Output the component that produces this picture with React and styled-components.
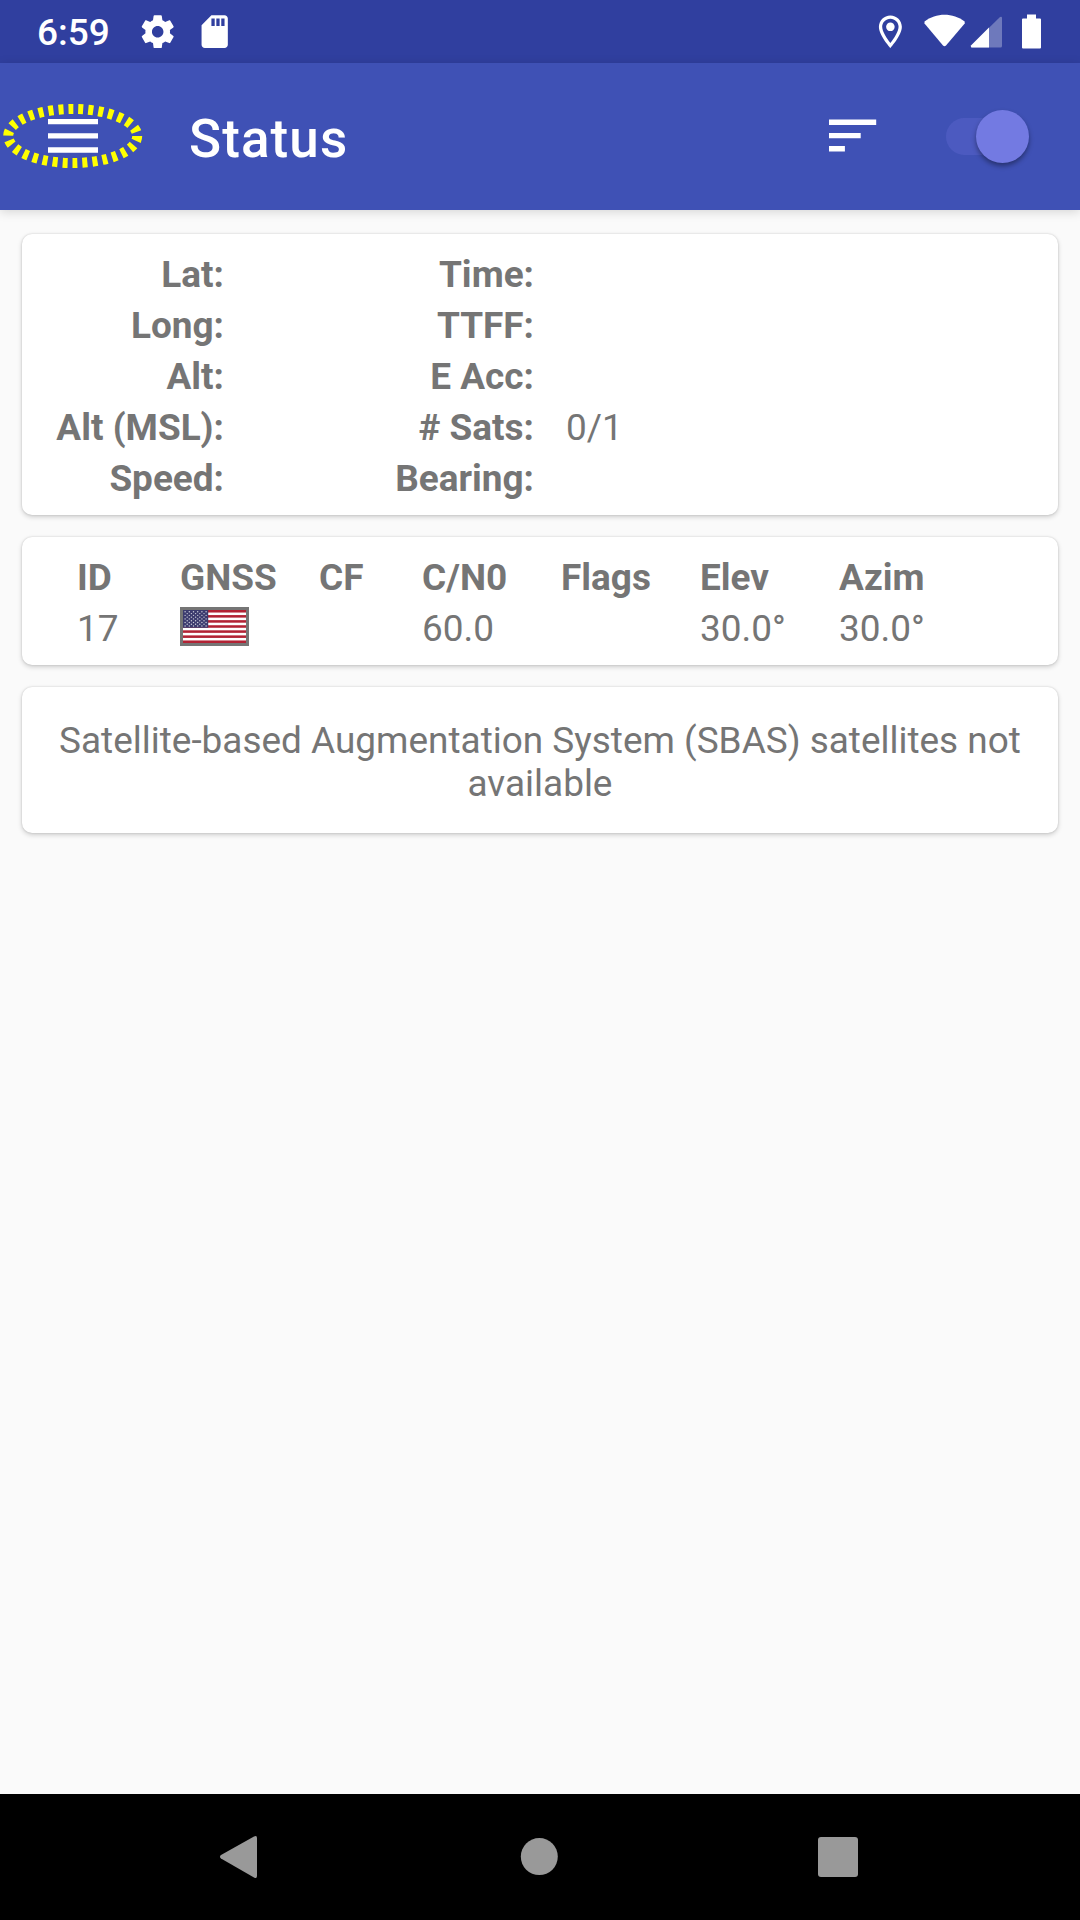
import React from 'react';
import styled, { createGlobalStyle } from 'styled-components';

const Global = createGlobalStyle`
  *, *::before, *::after { box-sizing: border-box; }
  html, body { margin: 0; padding: 0; background: #fafafa; }
  body { font-family: Roboto, "Noto Sans", sans-serif; }
  svg { display: block; flex: none; }
`;

const Screen = styled.div`
  display: flex;
  flex-direction: column;
  width: 1080px;
  height: 1920px;
  background: #fafafa;
  color: #757575;
  overflow: hidden;
`;

const StatusBar = styled.header`
  display: flex;
  align-items: center;
  flex: none;
  height: 63px;
  padding: 0 38px 0 37px;
  background: #303f9f;
  color: #fff;
`;

const Clock = styled.time`
  width: 100.5px;
  padding-top: 2px;
  font-size: 37px;
  font-weight: 500;
  line-height: 63px;
`;

const Notifications = styled.div`
  display: flex;
  align-items: center;
  gap: 18.6px;
`;

const Spacer = styled.div`
  flex: 1;
`;

const Toolbar = styled.nav`
  display: flex;
  align-items: center;
  flex: none;
  height: 147px;
  padding-right: 51px;
  background: #3f51b5;
  color: #fff;
  box-shadow: 0 2px 10px rgba(0, 0, 0, 0.15);
`;

const MenuButton = styled.button`
  width: 147px;
  height: 147px;
  flex: none;
  padding: 0;
  border: 0;
  background: none;
  cursor: pointer;
`;

const Title = styled.h1`
  margin: 0 0 0 42px;
  padding-top: 4px;
  font-size: 53px;
  font-weight: 500;
  line-height: 62px;
  letter-spacing: 1.1px;
`;

const IconButton = styled.button`
  width: 63px;
  height: 63px;
  margin-right: 62px;
  padding: 0;
  border: 0;
  background: none;
  cursor: pointer;
`;

const Track = styled.div`
  display: flex;
  align-items: center;
  justify-content: flex-end;
  width: 83px;
  height: 37px;
  border-radius: 19px;
  background: linear-gradient(90deg, #4c5ac0 75%, transparent 75%);
`;

const Thumb = styled.div`
  width: 53px;
  height: 53px;
  flex: none;
  border-radius: 50%;
  background: #737ae2;
  box-shadow: 0 3px 5px rgba(0, 0, 0, 0.38);
`;

const Content = styled.main`
  display: flex;
  flex-direction: column;
  gap: 22px;
  flex: 1;
  padding: 24px 22px;
`;

const Card = styled.section`
  height: ${(p) => p.$height}px;
  padding: ${(p) => p.$pad};
  border-radius: 10px;
  background: #fff;
  box-shadow: 0 0 2px rgba(0, 0, 0, 0.16), 0 2px 5px rgba(0, 0, 0, 0.18);
  font-size: 36.95px;
`;

const Facts = styled.div`
  display: grid;
  grid-template-columns: 202px 35px 275px 32px 1fr;
  grid-auto-rows: 51px;
  line-height: 51px;
`;

const Label = styled.span`
  grid-column: ${(p) => p.$col};
  font-weight: 700;
  text-align: right;
  white-space: nowrap;
`;

const Value = styled.span`
  grid-column: 5;
`;

const SatTable = styled.div`
  display: grid;
  grid-template-columns: 103px 139px 103px 139px 139px 139px 139px;
  grid-auto-rows: 51px;
  line-height: 51px;
`;

const Cell = styled.span`
  font-weight: ${(p) => (p.$head ? 700 : 400)};
  white-space: nowrap;
`;

const FlagFrame = styled.span`
  display: block;
  width: 69px;
  height: 39px;
  margin-top: 4px;
  border: 3px solid #757575;
`;

const Notice = styled.p`
  margin: 0;
  line-height: 43px;
  text-align: center;
`;

const NavBar = styled.footer`
  display: flex;
  align-items: center;
  justify-content: space-between;
  flex: none;
  height: 126px;
  padding: 0 221px 0 218px;
  background: #000;
`;

const facts = [
  ['Lat:', 'Time:', ''],
  ['Long:', 'TTFF:', ''],
  ['Alt:', 'E Acc:', ''],
  ['Alt (MSL):', '# Sats:', '0/1'],
  ['Speed:', 'Bearing:', ''],
];

const columns = ['ID', 'GNSS', 'CF', 'C/N0', 'Flags', 'Elev', 'Azim'];

function SettingsIcon() {
  return (
    <svg width="39.4" height="39.4" viewBox="0 0 24 24" fill="#fff">
      <path d="M19.43 12.98c.04-.32.07-.64.07-.98s-.03-.66-.07-.98l2.11-1.65c.19-.15.24-.42.12-.64l-2-3.46c-.12-.22-.39-.3-.61-.22l-2.49 1c-.52-.4-1.08-.73-1.69-.98l-.38-2.65C14.46 2.18 14.25 2 14 2h-4c-.25 0-.46.18-.49.42l-.38 2.65c-.61.25-1.17.59-1.69.98l-2.49-1c-.23-.09-.49 0-.61.22l-2 3.46c-.13.22-.07.49.12.64l2.11 1.65c-.04.32-.07.65-.07.98s.03.66.07.98l-2.11 1.65c-.19.15-.24.42-.12.64l2 3.46c.12.22.39.3.61.22l2.49-1c.52.4 1.08.73 1.69.98l.38 2.65c.03.24.24.42.49.42h4c.25 0 .46-.18.49-.42l.38-2.65c.61-.25 1.17-.59 1.69-.98l2.49 1c.23.09.49 0 .61-.22l2-3.46c.12-.22.07-.49-.12-.64l-2.11-1.65zM12 15.5c-1.93 0-3.5-1.57-3.5-3.5s1.57-3.5 3.5-3.5 3.5 1.57 3.5 3.5-1.57 3.5-3.5 3.5z" />
    </svg>
  );
}

function SdIcon() {
  return (
    <svg width="39.4" height="39.4" viewBox="0 0 24 24" fill="#fff">
      <path d="M18 2h-8L4 8v12c0 1.1.9 2 2 2h12c1.1 0 2-.9 2-2V4c0-1.1-.9-2-2-2zM12 8.500h-2V4h2v4.500zm3 0h-2V4h2v4.500zm3 0h-2V4h2v4.500z" />
    </svg>
  );
}

function StatusIcons() {
  return (
    <svg width="166" height="40" viewBox="876 11.500 166 40" fill="#fff">
      <g transform="translate(870.7 11.6) scale(1.64)">
        <path d="M12 2C8.130 2 5 5.130 5 9c0 5.250 7 13 7 13s7-7.750 7-13c0-3.870-3.130-7-7-7zM7 9c0-2.760 2.240-5 5-5s5 2.240 5 5c0 2.880-2.880 7.190-5 9.880C9.920 16.210 7 11.850 7 9z" />
        <circle cx="12" cy="9" r="2.600" />
      </g>
      <path d="M924.500 21C936 12 953 12 964.700 21V23L946 45Q944.500 46.500 943 45L924.500 23Z" />
      <path d="M971 45L1000 16.500Q1002 15.500 1002 17.500V45.500Q1002 47 1000.500 47H971.500Q970.500 46.500 971 45Z" opacity=".3" />
      <path d="M971 45L989 27V47H971.500Q970.500 46.500 971 45Z" />
      <path d="M1027 14H1036V18H1040Q1041 18 1041 19V47Q1041 48 1040 48H1023Q1022 48 1022 47V19Q1022 18 1023 18H1027Z" />
    </svg>
  );
}

function MenuIcon() {
  return (
    <svg width="147" height="147" viewBox="0 63 147 147">
      <path d="M48 119h50v5.300H48zM48 133.200h50v5.300H48zM48 147.300h50v5.500H48z" fill="#fff" />
      <ellipse cx="72.700" cy="136" rx="64.500" ry="27" fill="none" stroke="#ff0" strokeWidth="10" strokeDasharray="5 5" />
    </svg>
  );
}

function SortIcon() {
  return (
    <svg width="63" height="63" viewBox="821 105 63 63" fill="#fff">
      <path d="M829 119.500h47.200v5.500H829zM829 133h31.700v5.200H829zM829 146h15.900v5.500H829z" />
    </svg>
  );
}

function UsFlag() {
  const stars = [];
  for (let r = 0; r < 9; r += 1) {
    for (let c = 0; c < (r % 2 ? 5 : 6); c += 1) {
      stars.push([2.1 + c * 4.2 + (r % 2 ? 2.1 : 0), 1.8 + r * 1.78]);
    }
  }
  return (
    <svg width="63" height="33" viewBox="0 0 63 33">
      <rect width="63" height="33" fill="#fff" />
      {[0, 1, 2, 3, 4, 5, 6].map((i) => (
        <rect key={i} y={(i * 66) / 13} width="63" height={33 / 13} fill="#b22234" />
      ))}
      <rect width="25.200" height="17.770" fill="#3c3b6e" />
      {stars.map(([x, y]) => (
        <circle key={`${x}-${y}`} cx={x} cy={y} r=".7" fill="#fff" opacity=".75" />
      ))}
    </svg>
  );
}

export default function App() {
  return (
    <Screen>
      <Global />
      <StatusBar>
        <Clock>6:59</Clock>
        <Notifications>
          <SettingsIcon />
          <SdIcon />
        </Notifications>
        <Spacer />
        <StatusIcons />
      </StatusBar>
      <Toolbar>
        <MenuButton aria-label="Menu"><MenuIcon /></MenuButton>
        <Title>Status</Title>
        <Spacer />
        <IconButton aria-label="Sort"><SortIcon /></IconButton>
        <Track><Thumb /></Track>
      </Toolbar>
      <Content>
        <Card $height={281} $pad="15px 0 0 0">
          <Facts>
            {facts.map(([left, right, value]) => (
              <React.Fragment key={left}>
                <Label $col={1}>{left}</Label>
                <Label $col={3}>{right}</Label>
                <Value>{value}</Value>
              </React.Fragment>
            ))}
          </Facts>
        </Card>
        <Card $height={128} $pad="15px 0 0 55px">
          <SatTable>
            {columns.map((c) => <Cell key={c} $head>{c}</Cell>)}
            <Cell>17</Cell>
            <FlagFrame><UsFlag /></FlagFrame>
            <Cell />
            <Cell>60.0</Cell>
            <Cell />
            <Cell>30.0°</Cell>
            <Cell>30.0°</Cell>
          </SatTable>
        </Card>
        <Card $height={146} $pad="32px 26px">
          <Notice>Satellite-based Augmentation System (SBAS) satellites not available</Notice>
        </Card>
      </Content>
      <NavBar>
        <svg width="43" height="44" viewBox="218 1835 43 44" fill="#999">
          <path d="M221 1855Q219 1856.700 221 1858.500L254 1877.500Q257 1879 257 1876V1838Q257 1835 254 1836.500Z" />
        </svg>
        <svg width="38" height="38" viewBox="0 0 38 38"><circle cx="19.300" cy="18.600" r="18.500" fill="#999" /></svg>
        <svg width="42" height="42" viewBox="0 0 42 42"><rect x="1" y="1" width="40" height="40" rx="3" fill="#999" /></svg>
      </NavBar>
    </Screen>
  );
}
